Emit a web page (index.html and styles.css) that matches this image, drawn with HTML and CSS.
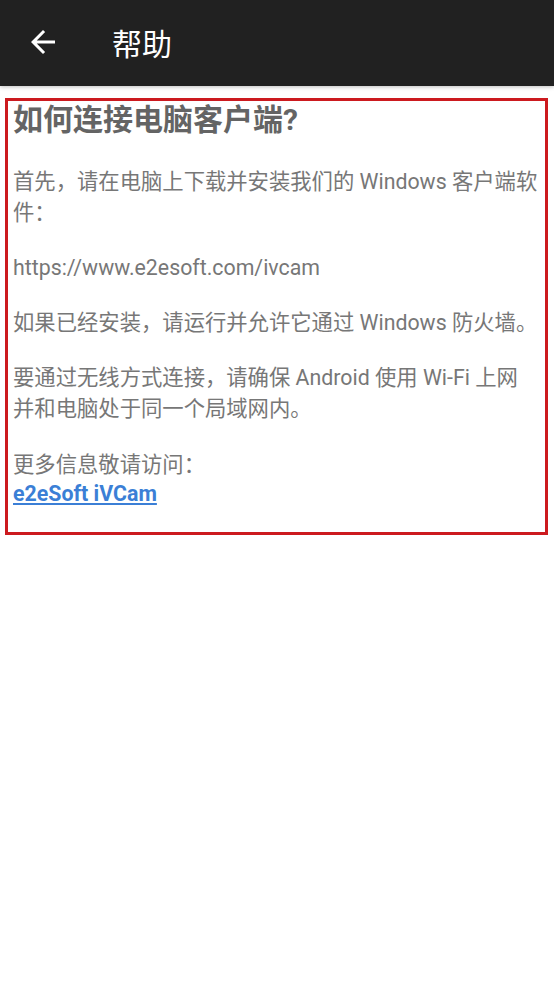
FILE: index.html
```html
<!DOCTYPE html>
<html lang="zh-CN">
<head>
    <meta charset="UTF-8">
    <meta name="viewport" content="width=device-width, initial-scale=1.0">
    <title>帮助</title>
    <link rel="stylesheet" href="styles.css">
</head>
<body>
    <header class="toolbar">
        <svg class="back" width="36" height="36" viewBox="0 0 24 24">
            <path d="M20 11H7.83l5.59-5.59L12 4l-8 8 8 8 1.41-1.41L7.83 13H20v-2z" fill="#fff"/>
        </svg>
        <h1>帮助</h1>
    </header>

    <!-- Help content -->
    <div class="help">
        <h2>如何连接电脑客户端?</h2>
        <p>首先，请在电脑上下载并安装我们的 Windows 客户端软件：</p>
        <p>https://www.e2esoft.com/ivcam</p>
        <p>如果已经安装，请运行并允许它通过 Windows 防火墙。</p>
        <p>要通过无线方式连接，请确保 Android 使用 Wi-Fi 上网<br>并和电脑处于同一个局域网内。</p>
        <p class="more">更多信息敬请访问：<br><a href="#">e2eSoft iVCam</a></p>
    </div>
</body>
</html>
```

FILE: styles.css
```css
body {
    margin: 0;
    background-color: #fff;
    font-family: Roboto, "Noto Sans CJK SC", sans-serif;
}

/* Toolbar */
.toolbar {
    height: 86px;
    background-color: #212121;
    display: flex;
    align-items: center;
    box-shadow: 0 1px 4px rgba(0,0,0,.25);
}

.toolbar .back {
    margin-left: 25px;
    margin-top: -2px;
}

.toolbar h1 {
    margin: -2px 0 0 51px;
    color: #fff;
    font-size: 30px;
    font-weight: normal;
}

/* Help box */
.help {
    margin: 12px 6px 0 5px;
    border: 3px solid #cc1a1f;
    padding: 0 4px 24px 5px;
    color: #777;
}

.help h2 {
    margin: 0 0 28px 0;
    font-size: 30px;
    line-height: 37px;
    color: #646464;
}

.help p {
    margin: 24px 0;
    font-size: 21.33px;
    line-height: 31px;
    white-space: nowrap;
}

.help p:first-of-type {
    white-space: normal;
}

.help p.more {
    margin: 26px 0 0 0;
    line-height: 29px;
}

.help a {
    color: #3b7fd6;
    font-weight: bold;
}
```
